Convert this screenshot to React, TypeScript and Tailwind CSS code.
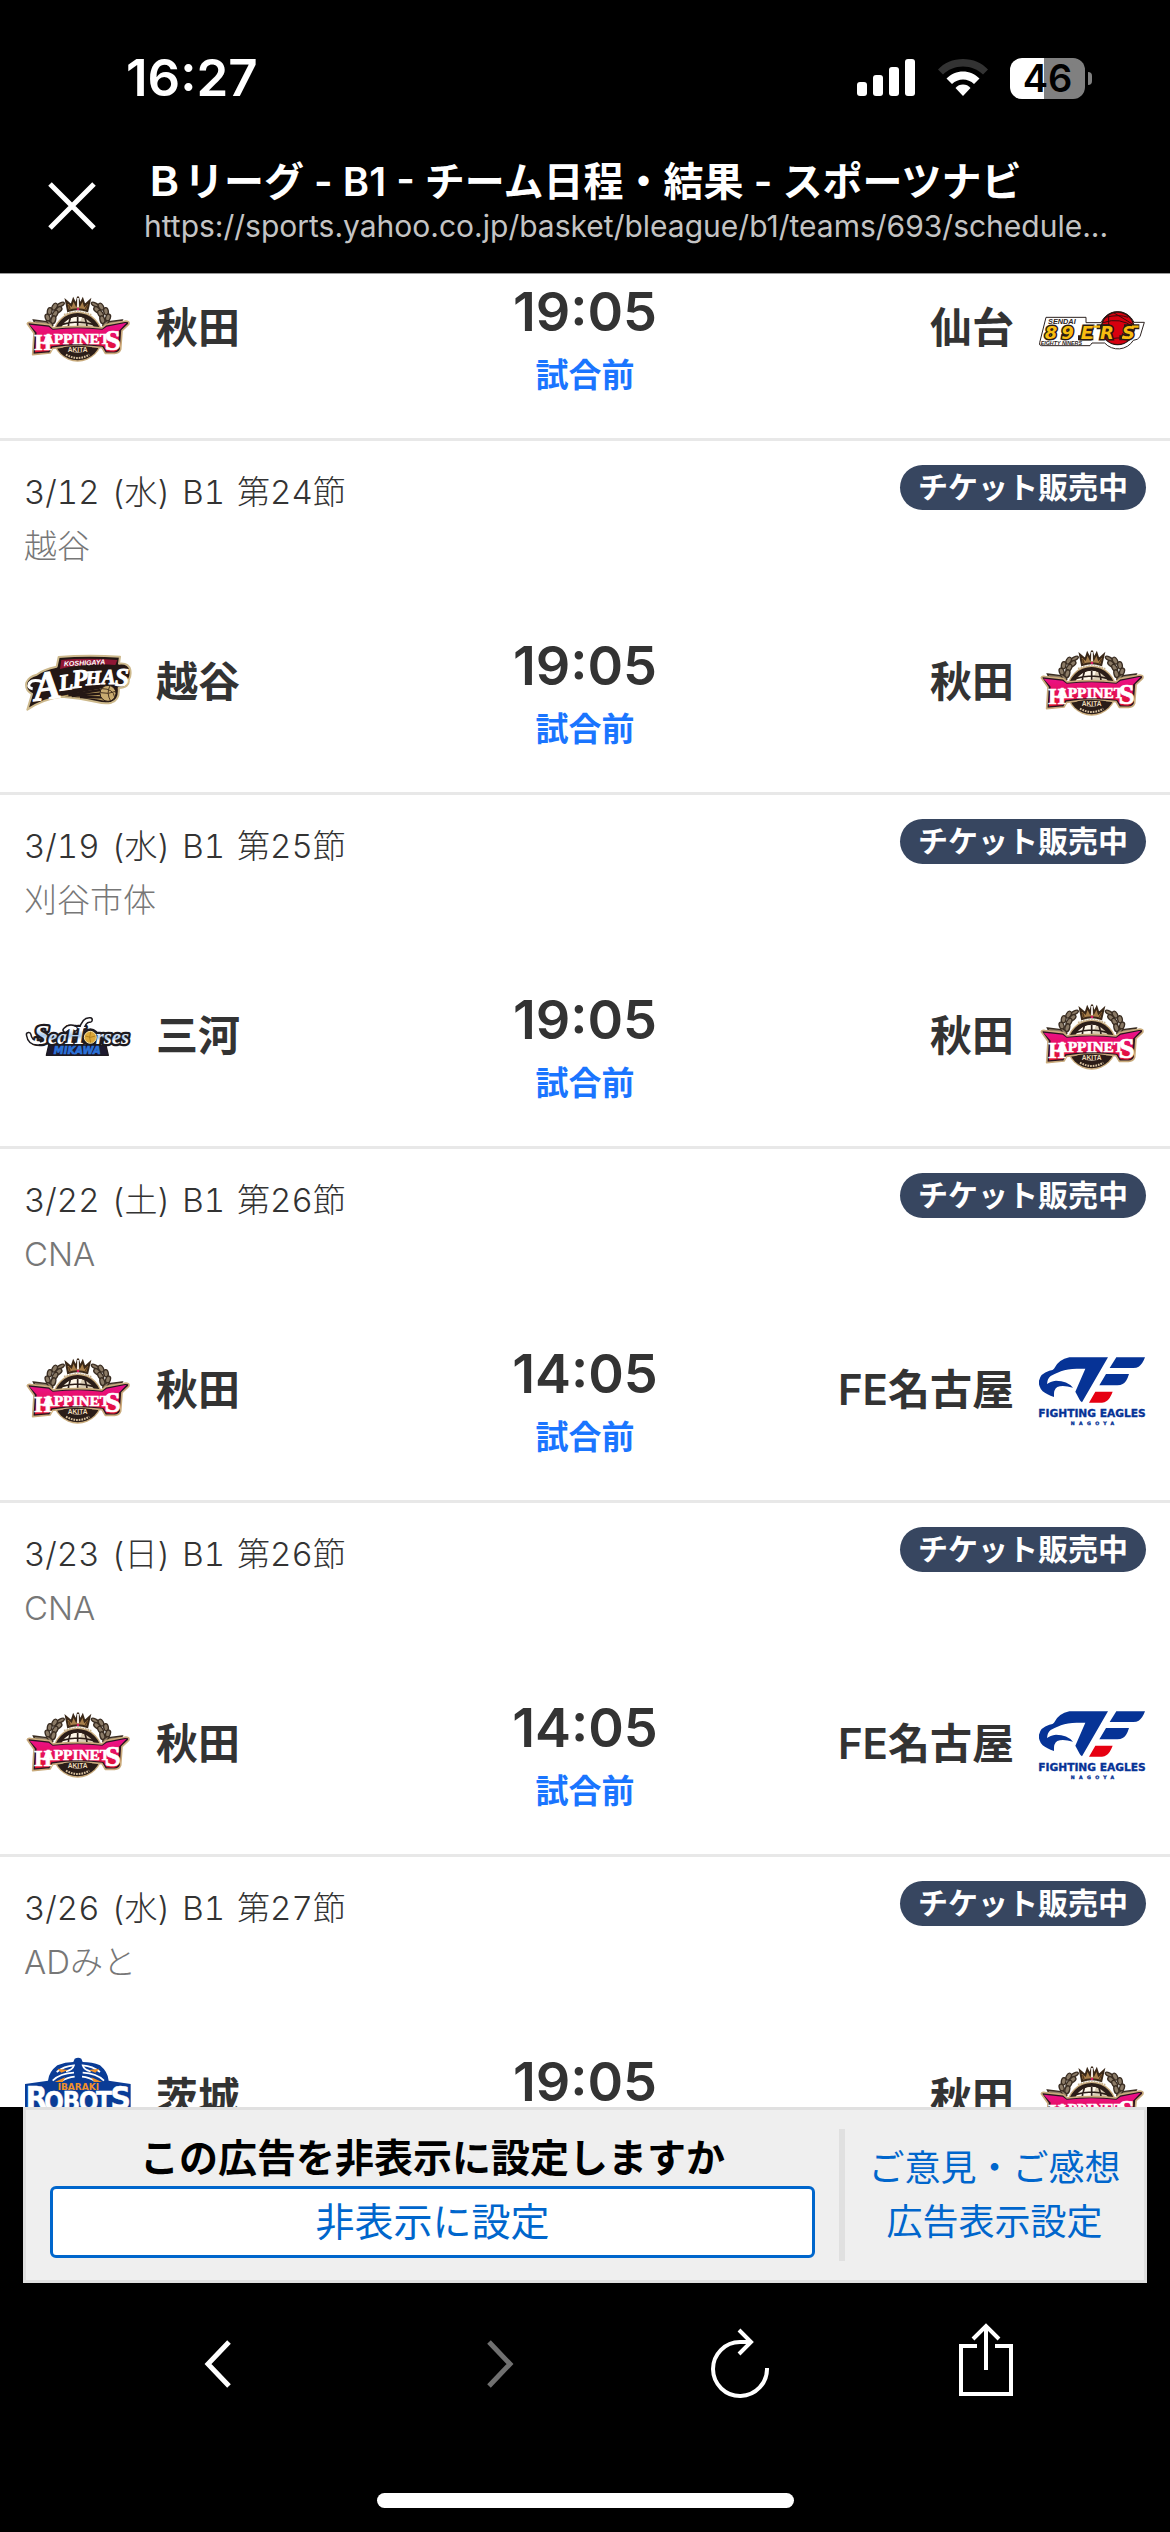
import type { ReactNode } from 'react'

type TeamId = 'akita' | 'sendai' | 'koshigaya' | 'mikawa' | 'nagoya' | 'ibaraki'

type Game = {
  id: string
  // day, weekday, league, round
  date?: string[]
  venue?: string
  time: string
  home: TeamId
  away: TeamId
}

const games: Game[] = [
  { id: 'g23', time: '19:05', home: 'akita', away: 'sendai' },
  { id: 'g24', date: ['3/12', '(水)', 'B1', '第24節'], venue: '越谷', time: '19:05', home: 'koshigaya', away: 'akita' },
  { id: 'g25', date: ['3/19', '(水)', 'B1', '第25節'], venue: '刈谷市体', time: '19:05', home: 'mikawa', away: 'akita' },
  { id: 'g26a', date: ['3/22', '(土)', 'B1', '第26節'], venue: 'CNA', time: '14:05', home: 'akita', away: 'nagoya' },
  { id: 'g26b', date: ['3/23', '(日)', 'B1', '第26節'], venue: 'CNA', time: '14:05', home: 'akita', away: 'nagoya' },
  { id: 'g27', date: ['3/26', '(水)', 'B1', '第27節'], venue: 'ADみと', time: '19:05', home: 'ibaraki', away: 'akita' },
]

/* ── Team logos ─────────────────────────────────────────── */

function LogoFrame({ viewBox, children }: { viewBox: string; children: ReactNode }) {
  return (
    <svg viewBox={viewBox} className="size-27 shrink-0" aria-hidden="true">
      {children}
    </svg>
  )
}

function Laurel() {
  return (
    <g fill="#8a7a66" stroke="#3a2d22" strokeWidth="4">
      <ellipse cx="182" cy="104" rx="12" ry="5" transform="rotate(-28 182 104)" />
      <ellipse cx="164" cy="110" rx="11" ry="7" transform="rotate(-60 164 110)" />
      <ellipse cx="176" cy="119" rx="11" ry="7" transform="rotate(-40 176 119)" />
      <ellipse cx="149" cy="124" rx="11" ry="7" transform="rotate(-80 149 124)" />
      <ellipse cx="165" cy="132" rx="12" ry="7" transform="rotate(-60 165 132)" />
      <ellipse cx="143" cy="143" rx="11" ry="7" transform="rotate(70 143 143)" />
      <ellipse cx="160" cy="149" rx="12" ry="7" transform="rotate(-75 160 149)" />
      <ellipse cx="148" cy="161" rx="12" ry="6" transform="rotate(35 148 161)" />
      <path d="M100 150 L140 155 L150 168 L104 158 Z" />
    </g>
  )
}

function AkitaLogo() {
  return (
    <LogoFrame viewBox="72 12 324 324">
      <defs>
        <linearGradient id="akita-band" x1="0" y1="0" x2="0" y2="1">
          <stop offset="0" stopColor="#ec1090" />
          <stop offset="1" stopColor="#e0102c" />
        </linearGradient>
      </defs>
      <Laurel />
      <g transform="translate(467 0) scale(-1 1)">
        <Laurel />
      </g>
      <circle cx="233" cy="200" r="75" fill="#c9ab7c" />
      <circle cx="233" cy="200" r="71" fill="#2b1d18" />
      <circle cx="233" cy="195" r="54" fill="#d9cbb4" />
      <path d="M186 170 a54 54 0 0 1 60 -28 l-14 36 z" fill="#fff8ea" />
      <g fill="none" stroke="#2b1d18" strokeWidth="5">
        <path d="M233 141 V180 M211 144 Q204 162 204 182 M255 144 Q262 162 262 182 M184 164 Q233 148 282 164" />
      </g>
      <path d="M192 134 Q233 118 274 134" fill="none" stroke="#c9b18a" strokeWidth="5" strokeDasharray="5 3" />
      {/* crown */}
      <path d="M204 123 L198 92 L214 106 L220 88 L228 104 L234 80 L240 104 L248 88 L254 106 L269 92 L262 123 Q233 112 204 123 Z" fill="#a87f4a" stroke="#3a2818" strokeWidth="6" />
      <path d="M234 84 V112" stroke="#fff" strokeWidth="5" />
      <circle cx="234" cy="117" r="4" fill="#d81c64" />
      <path d="M206 105 L210 117 M262 105 L256 117" stroke="#5a3b1c" strokeWidth="4" />
      {/* name band */}
      <path
        d="M82 161 Q84 155 94 158 L148 164 L160 174 Q233 166 305 174 L318 164 L378 153 Q390 154 386 163 L366 182 L362 238 Q358 250 344 250 L316 250 L306 233 Q233 222 158 235 L150 249 L98 254 L102 190 Z"
        fill="#2b1420"
        stroke="#c9ab7c"
        strokeWidth="5"
        strokeLinejoin="round"
      />
      <path
        d="M89 164 L146 170 L158 179 Q233 170 307 179 L320 170 L380 158 L357 182 L355 236 Q350 245 340 245 L320 244 L310 228 Q233 216 154 229 L146 243 L105 247 L110 188 Z"
        fill="url(#akita-band)"
      />
      <g fill="#fff" stroke="#fff" strokeWidth="2" fontFamily="Liberation Serif, serif" fontWeight="700" textAnchor="middle">
        <text x="129" y="240" fontSize="68">H</text>
        <text x="229" y="223" fontSize="46">APPINET</text>
        <text x="338" y="240" fontSize="88">S</text>
      </g>
      <path d="M190 232 Q233 222 276 232 L270 252 Q233 242 196 252 Z" fill="#2b1d18" />
      <text x="233" y="247" fontSize="20" fill="#ecd9b8" fontFamily="Liberation Sans, sans-serif" fontWeight="700" textAnchor="middle">
        AKITA
      </text>
      <path d="M198 254 Q233 274 268 254" fill="none" stroke="#d8c2a0" strokeWidth="6" strokeDasharray="5 3" />
    </LogoFrame>
  )
}

function SendaiLogo() {
  return (
    <LogoFrame viewBox="714 12 324 324">
      <path
        d="M738 142 H858 V158 H903 A54 54 0 0 1 1002 157 H1033 L1020 200 Q1014 210 1000 211 A54 54 0 0 1 914 219 H876 L870 227 H724 Q716 226 719 218 Z"
        fill="#fff"
        stroke="#2c2220"
        strokeWidth="3"
      />
      <circle cx="953" cy="175" r="49" fill="#d8000f" stroke="#2c1512" strokeWidth="4" />
      <g fill="none" stroke="#3a0d0d" strokeWidth="3">
        <path d="M940 128 Q962 140 1000 164 M916 142 Q958 132 984 142 M909 158 Q960 140 1002 172 M926 136 Q930 170 918 206 M916 208 Q950 202 990 204" />
      </g>
      <g fontFamily="Liberation Sans, sans-serif" fontStyle="italic" fontWeight="700">
        <text x="744" y="161" fontSize="22" fill="#2c2220">SENDAI</text>
        <text x="722" y="224" fontSize="16" fill="#2c2220">EIGHTY NINERS</text>
      </g>
      {/* joined strokes between the letters, dark edge first */}
      <path d="M834 203 H880 M890 170 H930 M972 170 H1018 M958 203 H990" stroke="#2a1b12" strokeWidth="15" />
      <g fontSize="54" fill="#f8bd10" stroke="#2a1b12" strokeWidth="9" paintOrder="stroke" fontFamily="DejaVu Sans, sans-serif" fontStyle="italic" fontWeight="700">
        <text x="734" y="206">8</text>
        <text x="784" y="206">9</text>
        <text x="842" y="206">E</text>
        <text x="900" y="206">R</text>
        <text x="966" y="206">S</text>
      </g>
      <path d="M852 203 H878 M880 170 H900 M996 170 H1016 M966 203 H984" stroke="#f8bd10" strokeWidth="7" />
    </LogoFrame>
  )
}

function KoshigayaLogo() {
  const outline =
    'M176 111 Q260 104 360 110 L357 131 Q386 128 391 150 Q394 168 386 180 Q389 202 356 204 Q360 240 334 248 Q316 253 290 246 Q240 234 186 230 Q130 236 82 269 L96 222 Q74 210 79 188 Q86 170 110 164 Q130 148 170 140 Z'
  return (
    <LogoFrame viewBox="72 24 324 324">
      <path d={outline} fill="#241714" stroke="#cdb98c" strokeWidth="6" strokeLinejoin="round" />
      <path d="M184 120 Q260 112 352 120 L346 135 Q262 128 180 147 Z" fill="#8f1735" />
      <text x="192" y="139" fontSize="21" fill="#fff" fontFamily="Liberation Sans, sans-serif" fontWeight="700" fontStyle="italic" transform="rotate(-3 192 139)">
        KOSHIGAYA
      </text>
      <g fill="#fff" stroke="#fff" strokeWidth="3" fontFamily="Liberation Serif, serif" fontWeight="700" fontStyle="italic">
        <text x="106" y="243" fontSize="122" transform="rotate(-8 106 243)">A</text>
        <text x="180" y="212" fontSize="68" transform="rotate(-8 180 212)">L</text>
        <text x="218" y="205" fontSize="78" transform="rotate(-6 218 205)">P</text>
        <text x="258" y="196" fontSize="60" transform="rotate(-4 258 196)">H</text>
        <text x="306" y="193" fontSize="60">A</text>
        <text x="344" y="197" fontSize="78">S</text>
      </g>
      <path d="M98 206 Q82 204 88 190 Q98 176 128 186" fill="none" stroke="#fff" strokeWidth="9" />
      <path d="M186 227 L300 206 L320 202 L320 244 L290 238 Z" fill="#b79a5e" />
      <path d="M205 225 L302 210 M215 228 L302 221 M240 231 L304 232" stroke="#241714" strokeWidth="7" />
      <circle cx="324" cy="220" r="24" fill="#c9ab70" stroke="#241714" strokeWidth="3" />
      <path d="M302 218 Q326 224 347 214 M330 197 Q318 220 332 243 M306 206 Q340 206 344 232" fill="none" stroke="#4a3520" strokeWidth="3" />
    </LogoFrame>
  )
}

function MikawaLogo() {
  return (
    <LogoFrame viewBox="72 6 324 324">
      <defs>
        <linearGradient id="mikawa-name" x1="0" y1="0" x2="0" y2="1">
          <stop offset="0.3" stopColor="#ffffff" />
          <stop offset="0.55" stopColor="#a9caee" />
          <stop offset="0.7" stopColor="#ffffff" />
        </linearGradient>
      </defs>
      <path d="M146 196 H318 L325 226 H139 Z" fill="#1d1a2f" stroke="#1d1a1f" strokeWidth="4" strokeLinejoin="round" />
      {/* outer edge of the script */}
      <g
        fill="#1d1a1f"
        stroke="#1d1a1f"
        strokeWidth="18"
        strokeLinejoin="round"
        fontFamily="Liberation Serif, serif"
        fontWeight="700"
        fontStyle="italic"
      >
        <path d="M86 164 Q90 190 116 188 M196 150 Q210 136 226 146 M244 150 Q252 118 270 120" fill="none" strokeLinecap="round" />
        <path d="M110 184 H376" />
        <circle cx="271" cy="172" r="18" />
      </g>
      <g
        fill="url(#mikawa-name)"
        stroke="#1d1a1f"
        strokeWidth="14"
        strokeLinejoin="round"
        paintOrder="stroke"
        fontFamily="Liberation Serif, serif"
        fontWeight="700"
        fontStyle="italic"
      >
        <text x="102" y="191" fontSize="84">S</text>
        <text x="144" y="191" fontSize="62">ea</text>
        <text x="196" y="191" fontSize="76">H</text>
        <text x="287" y="191" fontSize="62">rses</text>
      </g>
      <path d="M86 164 Q90 190 116 188 M196 150 Q210 136 226 146 M244 150 Q252 118 270 120" fill="none" stroke="#fff" strokeWidth="9" strokeLinecap="round" />
      <circle cx="271" cy="172" r="18" fill="#dca838" stroke="#f6e3a4" strokeWidth="3" />
      <path d="M256 168 Q272 176 286 168 M272 156 Q266 172 272 188" fill="none" stroke="#9a6c14" strokeWidth="2" />
      <text x="232" y="222" fontSize="30" fill="#2c72d8" stroke="#2c72d8" strokeWidth="2" fontFamily="DejaVu Sans, sans-serif" fontWeight="700" fontStyle="italic" textAnchor="middle">
        MIKAWA
      </text>
    </LogoFrame>
  )
}

function NagoyaLogo() {
  return (
    <LogoFrame viewBox="174 18 324 324">
      <g fill="#063396">
        <path d="M384 82 L306 217 Q302 216 298 208 L286 185 L316 116 H290 Q262 116 243 124 Q226 131 212 138 Q202 146 201 162 Q210 154 228 152 Q262 152 279 173 Q248 164 232 171 Q220 178 222 201 Q200 194 188 184 Q175 170 177 152 Q181 130 208 122 Q220 120 222 116 Q236 88 268 82 Z" />
        <path d="M409 82 H495 Q488 102 476 110 Q470 114 460 114 H389 Z" />
        <path d="M378 132 H447 Q440 156 428 162 Q422 166 412 166 H358 Z" />
      </g>
      <path d="M346 185 H398 Q390 206 380 213 Q374 218 366 218 H327 Z" fill="#e60012" />
      <g fill="#063396" stroke="#063396" fontFamily="DejaVu Sans, sans-serif" fontWeight="700" textAnchor="middle">
        <text x="336" y="261" fontSize="32" strokeWidth="1">FIGHTING EAGLES</text>
        <text x="344" y="284" fontSize="14" strokeWidth="1" letterSpacing="13">NAGOYA</text>
      </g>
    </LogoFrame>
  )
}

function IbarakiLogo() {
  return (
    <LogoFrame viewBox="0 0 324 324">
      <path d="M72 110 Q74 84 100 64 Q124 54 148 54 L152 44 Q163 38 172 44 L176 54 Q204 54 228 64 Q252 84 254 110 L320 120 V250 H3 V120 Z" fill="#0a3c96" />
      <g fill="none" stroke="#fff" strokeWidth="5">
        <path d="M98 84 Q120 66 150 64 Q146 78 126 82 M228 84 Q206 66 176 64 Q180 78 200 82" />
        <path d="M86 110 Q108 88 150 86 M240 110 Q218 88 176 86 M112 112 Q130 100 152 98 M214 112 Q196 100 174 98" />
      </g>
      <path d="M100 74 L132 78 L112 86 Z M226 74 L194 78 L214 86 Z M92 114 L124 100 L116 114 Z M234 114 L202 100 L210 114 Z" fill="#f0912a" />
      <path d="M163 48 V112" stroke="#0a3c96" strokeWidth="12" />
      <text x="163" y="138" fontSize="27" fill="#f0912a" fontFamily="DejaVu Sans, sans-serif" fontWeight="700" textAnchor="middle">
        IBARAKI
      </text>
      <g fill="#fff" stroke="#fff" strokeWidth="1" fontFamily="Liberation Sans Narrow, DejaVu Sans Condensed, Liberation Sans, sans-serif" fontWeight="700" textAnchor="middle">
        <text x="38" y="196" fontSize="96">R</text>
        <text x="90" y="202" fontSize="78">O</text>
        <text x="142" y="202" fontSize="78">B</text>
        <text x="194" y="202" fontSize="78">O</text>
        <text x="240" y="202" fontSize="78">T</text>
        <text x="290" y="196" fontSize="96">S</text>
      </g>
    </LogoFrame>
  )
}

const teams: Record<TeamId, { name: string; Logo: () => ReactNode }> = {
  akita: { name: '秋田', Logo: AkitaLogo },
  sendai: { name: '仙台', Logo: SendaiLogo },
  koshigaya: { name: '越谷', Logo: KoshigayaLogo },
  mikawa: { name: '三河', Logo: MikawaLogo },
  nagoya: { name: 'FE名古屋', Logo: NagoyaLogo },
  ibaraki: { name: '茨城', Logo: IbarakiLogo },
}

/* ── Header ─────────────────────────────────────────────── */

function StatusBar() {
  return (
    <div className="flex items-center justify-between pt-12 pr-[78px] pl-[126px] text-white">
      <time className="text-[51px] leading-[60px] font-semibold">16:27</time>
      <div className="flex items-center gap-[22px]">
        <svg viewBox="0 0 60 38" className="h-[38px] w-[60px]" fill="currentColor" aria-hidden="true">
          <rect x="1" y="23" width="10" height="14" rx="3" />
          <rect x="17" y="16" width="10" height="21" rx="3" />
          <rect x="33" y="8" width="10" height="29" rx="3" />
          <rect x="49" y="0" width="10" height="37" rx="3" />
        </svg>
        <svg viewBox="0 0 50 38" className="h-[38px] w-[50px]" aria-hidden="true">
          <path d="M25 0 C15 0 6 4 0 10.500 L5 15.500 C10 10.500 17 7.500 25 7.500 C33 7.500 40 10.500 45 15.500 L50 10.500 C44 4 35 0 25 0 Z" fill="#333" />
          <path d="M25 12.500 C19 12.500 13 15 8.500 19.500 L14 25 C17 22 21 20.500 25 20.500 C29 20.500 33 22 36 25 L41.500 19.500 C37 15 31 12.500 25 12.500 Z" fill="#fff" />
          <path d="M25 25.500 C22 25.500 19.500 26.500 17.500 29 L25 37 L32.500 29 C30.500 26.500 28 25.500 25 25.500 Z" fill="#fff" />
        </svg>
        <div className="flex items-center gap-[3px]">
          <div className="flex h-[41px] w-[75px] items-center justify-center rounded-[12px] bg-linear-to-r from-white from-46% to-[#808080] to-46%">
            <span className="text-[38px] leading-[41px] font-semibold text-black">46</span>
          </div>
          <div className="h-[13px] w-1 rounded-r-full bg-[#808080]" />
        </div>
      </div>
    </div>
  )
}

function BrowserHeader() {
  return (
    <header className="shrink-0 border-b border-[#999] bg-black pb-[27px]">
      <StatusBar />
      <div className="flex items-center gap-12 px-12 pt-[50px] text-white">
        <button type="button" aria-label="閉じる" className="mt-2 shrink-0">
          <svg viewBox="0 0 48 48" className="size-12" fill="none" stroke="currentColor" strokeWidth="5" aria-hidden="true">
            <path d="M2 2 L46 46 M46 2 L2 46" />
          </svg>
        </button>
        <div className="min-w-0 flex-1">
          <h1 className="truncate text-[40px] leading-[48px] font-semibold">Ｂリーグ - B1 - チーム日程・結果 - スポーツナビ</h1>
          <p className="truncate text-[30px] leading-[40px] text-[#c4c4c4]">
            https://sports.yahoo.co.jp/basket/bleague/b1/teams/693/schedule...
          </p>
        </div>
      </div>
    </header>
  )
}

/* ── Schedule ───────────────────────────────────────────── */

function GameRow({ game }: { game: Game }) {
  const home = teams[game.home]
  const away = teams[game.away]

  return (
    <li className="border-b-3 border-[#e8e8e8] px-6 pb-14">
      {game.date && (
        <div className="flex items-start justify-between pt-6 pb-[55px]">
          <div className="text-[33px] leading-[54px] font-light">
            <p className="flex gap-3 text-[#333] tabular-nums">
              {game.date.map(part => (
                <span key={part}>{part}</span>
              ))}
            </p>
            <p className="text-[#777]">{game.venue}</p>
          </div>
          <span className="rounded-full bg-[#374660] px-[18px] text-[30px] leading-[45px] font-semibold text-white">
            チケット販売中
          </span>
        </div>
      )}
      <div className="grid h-27 grid-cols-[1fr_auto_1fr] items-start text-[#333]">
        <div className="flex items-center gap-6">
          <home.Logo />
          <span className="text-[42px] leading-[60px] font-semibold">{home.name}</span>
        </div>
        <div className="flex flex-col items-center pt-2">
          <p className="text-[54px] leading-[60px] font-semibold">{game.time}</p>
          <p className="text-[33px] leading-[66px] font-semibold text-[#1a75ff]">試合前</p>
        </div>
        <div className="flex items-center justify-end gap-6">
          <span className="text-[42px] leading-[60px] font-semibold">{away.name}</span>
          <away.Logo />
        </div>
      </div>
    </li>
  )
}

/* ── Footer ─────────────────────────────────────────────── */

function AdSettings() {
  return (
    <section className="mx-[23px] flex border-3 border-[#e0e0e0] bg-[#efefef] py-[19px]">
      <div className="flex flex-1 flex-col px-6 pb-[3px]">
        <h2 className="text-center text-[39px] leading-[57px] font-bold text-black">この広告を非表示に設定しますか</h2>
        <button type="button" className="h-[72px] rounded-md border-3 border-[#0066cc] bg-white text-[39px] leading-[66px] text-[#0066cc]">
          非表示に設定
        </button>
      </div>
      <div className="flex w-[305px] flex-col items-center justify-center border-l-6 border-[#e0e0e0] text-[36px] leading-[54px] text-[#0066cc]">
        <a href="#feedback">ご意見・ご感想</a>
        <a href="#ad-settings">広告表示設定</a>
      </div>
    </section>
  )
}

function Toolbar() {
  return (
    <nav className="grid grid-cols-[316fr_250fr_230fr_264fr] items-center justify-items-center pt-[42px] pr-13 pl-15 text-white">
      <button type="button" aria-label="戻る">
        <svg viewBox="0 0 28 48" className="h-12 w-7" fill="none" stroke="currentColor" strokeWidth="5" aria-hidden="true">
          <path d="M25 2 L4 24 L25 46" />
        </svg>
      </button>
      <button type="button" aria-label="進む" disabled className="text-[#707070]">
        <svg viewBox="0 0 28 48" className="h-12 w-7" fill="none" stroke="currentColor" strokeWidth="5" aria-hidden="true">
          <path d="M3 2 L24 24 L3 46" />
        </svg>
      </button>
      <button type="button" aria-label="再読み込み">
        <svg viewBox="0 0 60 78" className="h-[78px] w-15" fill="none" stroke="currentColor" strokeWidth="4" aria-hidden="true">
          <path d="M57 43 A27 27 0 1 1 30 17 H39" />
          <path d="M29 5 L41 17 L29 29" />
        </svg>
      </button>
      <button type="button" aria-label="共有">
        <svg viewBox="0 0 54 78" className="h-[78px] w-[54px] overflow-visible" fill="none" stroke="currentColor" strokeWidth="4" aria-hidden="true">
          <path d="M18 21 H2 V69 H52 V21 H36" />
          <path d="M27 45 V2 M14 14 L27 1 L40 14" />
        </svg>
      </button>
    </nav>
  )
}

export default function App() {
  return (
    <div
      lang="ja"
      className="flex h-screen flex-col bg-black font-[Inter,'Noto_Sans_CJK_JP',sans-serif]"
    >
      <BrowserHeader />

      <main className="min-h-0 flex-1 overflow-hidden bg-white">
        <ul>
          {games.map(game => (
            <GameRow key={game.id} game={game} />
          ))}
        </ul>
      </main>

      <footer className="flex shrink-0 flex-col bg-black">
        <AdSettings />
        <Toolbar />
        <div className="mx-auto mt-[90px] mb-6 h-[15px] w-[417px] rounded-full bg-white" />
      </footer>
    </div>
  )
}
